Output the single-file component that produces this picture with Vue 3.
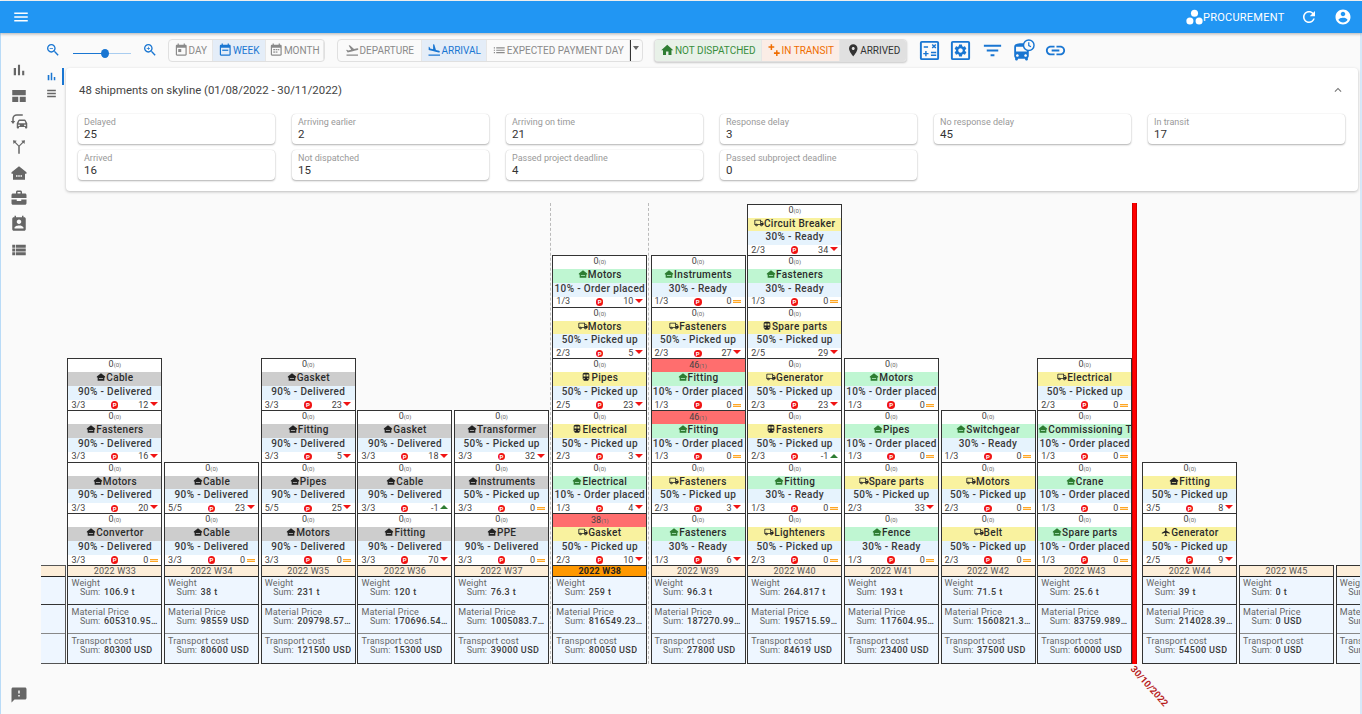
<template>
  <div class="app">
    <header class="appbar">
      <svg class="bar-icon menu-icon" viewBox="0 0 24 24"><path :d="icons.menu" /></svg>
      <div class="bar-right">
        <svg class="dots-icon" viewBox="0 0 24 24"><circle cx="12" cy="6" r="5" /><circle cx="5.5" cy="17" r="5" /><circle cx="18.5" cy="17" r="5" /></svg>
        <span class="module-name">PROCUREMENT</span>
        <svg class="bar-icon refresh-icon" viewBox="0 0 24 24"><path :d="icons.refresh" /></svg>
        <svg class="bar-icon account-icon" viewBox="0 0 24 24"><path :d="icons.account" /></svg>
      </div>
    </header>

    <div class="layout">
      <nav class="sidenav">
        <div class="nav-top">
          <svg v-for="n in navIcons" :key="n" class="nav-icon" viewBox="0 0 24 24"><path :d="icons[n]" /></svg>
        </div>
        <svg class="nav-icon feedback" viewBox="0 0 24 24"><path :d="icons.feedback" /></svg>
      </nav>

      <main class="main">
        <div class="toolbar">
          <svg class="zoom-icon" viewBox="0 0 24 24"><path :d="icons.zoomOut" /></svg>
          <div class="slider"><span class="slider-fill"></span><span class="slider-thumb"></span></div>
          <svg class="zoom-icon zoom-in" viewBox="0 0 24 24"><path :d="icons.zoomIn" /></svg>

          <div class="btn-group first-group">
            <button class="tbtn w-day"><svg viewBox="0 0 24 24"><path :d="icons.calendar" /><rect x="7" y="10" width="5" height="5" /></svg>DAY</button>
            <button class="tbtn w-week active"><svg viewBox="0 0 24 24"><path :d="icons.calendar" /><rect x="7" y="11" width="10" height="2" /></svg>WEEK</button>
            <button class="tbtn w-month"><svg viewBox="0 0 24 24"><path :d="icons.calendar" /><rect x="7" y="10" width="3" height="2" /><rect x="11" y="10" width="3" height="2" /><rect x="15" y="10" width="2" height="2" /><rect x="7" y="14" width="3" height="2" /><rect x="11" y="14" width="3" height="2" /></svg>MONTH</button>
          </div>

          <div class="btn-group second-group">
            <button class="tbtn w-dep"><svg viewBox="0 0 24 24"><path :d="icons.takeoff" /></svg>DEPARTURE</button>
            <button class="tbtn w-arr active"><svg viewBox="0 0 24 24"><path :d="icons.land" /></svg>ARRIVAL</button>
            <button class="tbtn w-pay"><svg viewBox="0 0 24 24"><path :d="icons.list" /></svg>EXPECTED PAYMENT DAY</button>
            <span class="drop"><span class="drop-arrow"></span></span>
          </div>

          <div class="btn-group third-group">
            <button class="tbtn w-nd green"><svg viewBox="0 0 24 24"><path :d="icons.home" /></svg>NOT DISPATCHED</button>
            <button class="tbtn w-it orange"><svg viewBox="0 0 24 24"><path :d="icons.transit" /></svg>IN TRANSIT</button>
            <button class="tbtn w-ad dark"><svg viewBox="0 0 24 24"><path :d="icons.pin" /></svg>ARRIVED</button>
          </div>

          <div class="tool-icons">
            <svg class="tool calc" viewBox="0 0 24 24">
              <path :d="icons.calc" />
            </svg>
            <svg class="tool" viewBox="0 0 24 24">
              <path d="M4 2h16a2 2 0 0 1 2 2v16a2 2 0 0 1-2 2H4a2 2 0 0 1-2-2V4a2 2 0 0 1 2-2zm0 2v16h16V4z" />
              <path :d="icons.gear" transform="translate(4.2 4.2) scale(.65)" />
            </svg>
            <svg class="tool" viewBox="0 0 24 24"><path :d="icons.filter" /></svg>
            <svg class="tool" viewBox="0 0 24 24">
              <path :d="icons.bus" transform="translate(-1.500 2.500) scale(.95)" />
              <circle cx="17.500" cy="6.500" r="5.500" fill="#fafafa" stroke="#1976d2" stroke-width="1.500" />
              <path d="M17.500 3.500v3.300l2.300 1.300" fill="none" stroke="#1976d2" stroke-width="1.300" />
            </svg>
            <svg class="tool" viewBox="0 0 24 24"><path :d="icons.link" /></svg>
          </div>
        </div>

        <div class="top-row">
          <div class="subnav">
            <svg class="sub-icon blue" viewBox="0 0 24 24"><path :d="icons.bars" /></svg>
            <svg class="sub-icon" viewBox="0 0 24 24"><path :d="icons.lines" /></svg>
            <span class="sub-active"></span>
          </div>
          <section class="panel">
            <div class="panel-head">
              <span>48 shipments on skyline (01/08/2022 - 30/11/2022)</span>
              <svg class="chevron" viewBox="0 0 24 24"><path d="M7.41 15.41 12 10.83l4.59 4.58L18 14l-6-6-6 6z" /></svg>
            </div>
            <div class="stats">
              <div v-for="s in stats" :key="s.label" class="stat">
                <div class="stat-label">{{ s.label }}</div>
                <div class="stat-value">{{ s.value }}</div>
              </div>
            </div>
          </section>
        </div>

        <div class="chart">
          <span class="week-mark" style="left: 508.5px"></span>
          <span class="week-mark" style="left: 607px"></span>

          <div class="columns">
            <div
              v-for="w in weeks"
              :key="w.name"
              class="col"
              :class="{ current: w.current, 'after-line': w.afterLine, 'no-text': w.blank }"
            >
              <div v-for="(c, i) in w.cards" :key="i" class="card">
                <div class="count" :class="{ alarm: c.alarm }">
                  {{ c.alarm ? c.alarm : 0 }}<small>({{ c.alarm ? 1 : 0 }})</small>
                </div>
                <div class="name" :class="c.band">
                  <svg class="kind" viewBox="0 0 24 24"><path :d="icons[c.kind]" /></svg>{{ c.name }}
                </div>
                <div class="progress">{{ c.progress }}</div>
                <div class="foot">
                  <span class="frac">{{ c.frac }}</span>
                  <span class="pcell"><span v-if="!c.noP" class="p-dot">P</span></span>
                  <span class="delay">
                    {{ c.delay }}
                    <i v-if="c.delay > 0" class="tri-down"></i>
                    <i v-else-if="c.delay < 0" class="tri-up"></i>
                    <i v-else class="equal"></i>
                  </span>
                </div>
              </div>
              <div class="week-name">{{ w.blank ? '' : w.name }}</div>
              <div v-for="m in metrics(w)" :key="m.label" class="metric">
                <template v-if="!w.blank">
                  <div class="metric-label">{{ m.label }}</div>
                  <div class="metric-sum"><span>Sum:</span><b>{{ m.value }}</b></div>
                </template>
              </div>
            </div>
          </div>

          <span class="today-line"></span>
          <span class="today-label">30/10/2022</span>
        </div>
      </main>
    </div>
  </div>
</template>

<script setup>
const icons = {
  menu: 'M3 18h18v-2H3v2zm0-5h18v-2H3v2zm0-7v2h18V6H3z',
  refresh: 'M17.65 6.35C16.2 4.9 14.21 4 12 4c-4.42 0-7.99 3.58-7.99 8s3.57 8 7.99 8c3.73 0 6.84-2.55 7.73-6h-2.08c-.82 2.33-3.04 4-5.65 4-3.31 0-6-2.69-6-6s2.69-6 6-6c1.66 0 3.14.69 4.22 1.78L13 11h7V4l-2.35 2.35z',
  account: 'M12 2C6.48 2 2 6.48 2 12s4.48 10 10 10 10-4.48 10-10S17.52 2 12 2zm0 3c1.66 0 3 1.34 3 3s-1.34 3-3 3-3-1.34-3-3 1.34-3 3-3zm0 14.2c-2.5 0-4.71-1.28-6-3.22.03-1.99 4-3.08 6-3.08 1.99 0 5.97 1.09 6 3.08-1.29 1.94-3.5 3.22-6 3.22z',
  bars: 'M5 9.2h3V19H5zM10.6 5h2.8v14h-2.8zm5.6 8H19v6h-2.8z',
  lines: 'M4 5h16v3H4zm0 5.5h16v3H4zM4 16h16v3H4z',
  quilt: 'M3 4h18v7H3zM3 13h8v7H3zM13 13h8v7h-8z',
  cars: 'M9 3h8v2H9a4 4 0 0 0-4 4v3h2l-3 4-3-4h2V9a6 6 0 0 1 6-6zm3 7h7.5c.6 0 1 .3 1.2.8L23 15v6a1 1 0 0 1-1 1h-1a1 1 0 0 1-1-1v-1h-8v1a1 1 0 0 1-1 1h-1a1 1 0 0 1-1-1v-6l2.3-4.2c.2-.5.7-.8 1.2-.8zm.5 2-1.2 3h9.4l-1.2-3zM12 16.5a1.2 1.2 0 1 0 0 2.4 1.2 1.2 0 0 0 0-2.4zm8 0a1.2 1.2 0 1 0 0 2.4 1.2 1.2 0 0 0 0-2.4z',
  merge: 'M4 3l5 .7-1.6 1.6L12 9.9l4.6-4.6L15 3.7 20 3l-.7 5-1.6-1.6L13 11.1V21h-2v-9.9L6.300 6.400 4.700 8z',
  bank: 'M12 3 2 11v2h2v8h16v-8h2v-2zM8 15h2v2H8zm3 0h2v2h-2zm3 0h2v2h-2z',
  work: 'M20 6h-4V4c0-1.11-.89-2-2-2h-4c-1.11 0-2 .89-2 2v2H4c-1.11 0-1.99.89-1.99 2L2 12h20V8c0-1.11-.89-2-2-2zm-6 0h-4V4h4v2zM2 14v5c0 1.11.89 2 2 2h16c1.11 0 2-.89 2-2v-5h-7v2H9v-2z',
  agenda: 'M19 3h-1V1h-2v2H8V1H6v2H5c-1.1 0-2 .9-2 2v14c0 1.1.9 2 2 2h14c1.1 0 2-.9 2-2V5c0-1.1-.9-2-2-2zm-7 3c1.66 0 3 1.34 3 3s-1.34 3-3 3-3-1.34-3-3 1.34-3 3-3zm6 12H6v-1c0-2 4-3.1 6-3.1s6 1.1 6 3.1v1z',
  table: 'M3 5h4v4H3zM8 5h13v4H8zM3 10h4v4H3zM8 10h13v4H8zM3 15h4v4H3zM8 15h13v4H8z',
  feedback: 'M20 2H4c-1.1 0-1.99.9-1.99 2L2 22l4-4h14c1.1 0 2-.9 2-2V4c0-1.1-.9-2-2-2zm-7 12h-2v-2h2v2zm0-4h-2V6h2v4z',
  zoomOut: 'M15.5 14h-.79l-.28-.27C15.41 12.59 16 11.11 16 9.5 16 5.91 13.09 3 9.5 3S3 5.91 3 9.5 5.91 16 9.5 16c1.61 0 3.09-.59 4.23-1.57l.27.28v.79l5 4.99L20.490 19l-4.99-5zm-6 0C7.01 14 5 11.99 5 9.5S7.01 5 9.5 5 14 7.010 14 9.500 11.99 14 9.500 14zM7 9h5v1H7z',
  zoomIn: 'M15.5 14h-.79l-.28-.27C15.41 12.59 16 11.11 16 9.5 16 5.91 13.09 3 9.5 3S3 5.91 3 9.5 5.91 16 9.5 16c1.61 0 3.09-.59 4.23-1.57l.27.28v.79l5 4.99L20.490 19l-4.99-5zm-6 0C7.01 14 5 11.99 5 9.5S7.01 5 9.5 5 14 7.010 14 9.500 11.99 14 9.500 14zM12 10h-2v2H9v-2H7V9h2V7h1v2h2v1z',
  calendar: 'M19 3h-1V1h-2v2H8V1H6v2H5c-1.1 0-2 .9-2 2v14c0 1.1.9 2 2 2h14c1.1 0 2-.9 2-2V5c0-1.1-.9-2-2-2zm0 16H5V8h14v11z',
  takeoff: 'M2.5 19h19v2h-19zm19.57-9.36c-.21-.8-1.04-1.28-1.84-1.06L14.92 10l-6.9-6.43-1.93.51 4.14 7.17-4.97 1.33-1.97-1.54-1.45.39 1.82 3.16.77 1.33 1.6-.43 5.31-1.42 4.35-1.16L21 11.49c.81-.23 1.28-1.05 1.07-1.85z',
  land: 'M2.5 19h19v2h-19zm7.18-5.730 4.35 1.16 5.31 1.42c.8.21 1.62-.26 1.84-1.06.21-.8-.26-1.62-1.06-1.84l-5.31-1.42-2.76-9.02L10.120 2v8.280L5.150 8.950l-.93-2.320-1.450-.39v5.170l1.600.43 5.310 1.430z',
  list: 'M3 13h2v-2H3v2zm0 4h2v-2H3v2zm0-8h2V7H3v2zm4 4h14v-2H7v2zm0 4h14v-2H7v2zM7 7v2h14V7H7z',
  home: 'M10 20v-6h4v6h5v-8h3L12 3 2 12h3v8z',
  transit: 'M6 2h2.500v3.500H12V8H8.500v3.500H6V8H2.500V5.500H6zM15 12h2.500v3.500H21V18h-3.500v3.500H15V18h-3.500v-2.500H15z',
  pin: 'M12 2C8.130 2 5 5.130 5 9c0 5.250 7 13 7 13s7-7.750 7-13c0-3.870-3.130-7-7-7zm0 9.500c-1.380 0-2.500-1.120-2.500-2.500s1.120-2.500 2.500-2.500 2.500 1.120 2.500 2.500-1.120 2.500-2.500 2.500z',
  calc: 'M4 2h16a2 2 0 0 1 2 2v16a2 2 0 0 1-2 2H4a2 2 0 0 1-2-2V4a2 2 0 0 1 2-2zm0 2v16h16V4zm2 3.500h4.500V9H6zm8.300-1.200 1.100-1.100 1.300 1.300 1.300-1.300 1.100 1.100-1.300 1.300 1.300 1.300-1.100 1.100-1.300-1.300-1.300 1.300-1.100-1.100 1.300-1.300zM7.500 12.500H9v2h2V16H9v2H7.500v-2h-2v-1.500h2zm6 .800H19v1.500h-5.500zm0 3H19v1.500h-5.500z',
  gear: 'M19.140 12.940c.04-.3.06-.61.06-.94 0-.32-.02-.64-.07-.94l2.030-1.580c.18-.14.23-.41.12-.61l-1.920-3.320c-.12-.22-.37-.29-.59-.22l-2.390.96c-.5-.38-1.030-.7-1.620-.94l-.36-2.540c-.04-.24-.24-.41-.48-.41h-3.840c-.24 0-.43.17-.47.41l-.36 2.540c-.59.24-1.130.57-1.620.94l-2.390-.96c-.22-.08-.47 0-.59.22L2.740 8.870c-.12.21-.08.47.12.61l2.030 1.580c-.05.3-.09.63-.09.94s.02.64.07.94l-2.030 1.580c-.18.14-.23.41-.12.61l1.920 3.320c.12.22.37.29.59.22l2.390-.96c.5.38 1.030.7 1.620.94l.36 2.540c.05.24.24.41.48.41h3.840c.24 0 .44-.17.47-.41l.36-2.540c.59-.24 1.130-.56 1.620-.94l2.390.96c.22.08.47 0 .59-.22l1.920-3.320c.12-.22.07-.47-.12-.61l-2.010-1.580zM12 15.600c-1.980 0-3.600-1.620-3.600-3.600s1.620-3.600 3.600-3.600 3.600 1.620 3.600 3.600-1.620 3.600-3.600 3.600z',
  filter: 'M10 18h4v-2h-4v2zM3 6v2h18V6H3zm3 7h12v-2H6v2z',
  bus: 'M4 16c0 .88.39 1.670 1 2.220V20c0 .55.45 1 1 1h1c.55 0 1-.45 1-1v-1h8v1c0 .55.45 1 1 1h1c.55 0 1-.45 1-1v-1.780c.61-.55 1-1.340 1-2.220V6c0-3.500-3.580-4-8-4s-8 .5-8 4v10zm3.500 1c-.83 0-1.500-.67-1.500-1.500S6.670 14 7.500 14s1.500.67 1.500 1.500S8.330 17 7.500 17zm9 0c-.83 0-1.500-.67-1.500-1.500s.67-1.500 1.500-1.500 1.500.67 1.500 1.500-.67 1.500-1.500 1.500zm1.500-6H6V6h12v5z',
  link: 'M3.900 12c0-1.710 1.390-3.100 3.100-3.100h4V7H7c-2.760 0-5 2.240-5 5s2.240 5 5 5h4v-1.900H7c-1.710 0-3.100-1.390-3.100-3.100zM8 13h8v-2H8v2zm9-6h-4v1.900h4c1.710 0 3.100 1.390 3.100 3.100s-1.390 3.100-3.100 3.100h-4V17h4c2.760 0 5-2.240 5-5s-2.240-5-5-5z',
  // cargo kinds
  h: 'M12 3 2 11v2h2v8h16v-8h2v-2zM7 15h10v2H7z',
  t: 'M20 8h-3V4H3c-1.100 0-2 .9-2 2v11h2c0 1.660 1.340 3 3 3s3-1.340 3-3h6c0 1.660 1.340 3 3 3s3-1.340 3-3h2v-5l-3-4zm-.5 1.500 1.960 2.500H17V9.500h2.500zM6 18c-.55 0-1-.45-1-1s.45-1 1-1 1 .45 1 1-.45 1-1 1zm2.220-3c-.55-.61-1.330-1-2.220-1s-1.670.39-2.220 1H3V6h12v9H8.220zM18 18c-.55 0-1-.45-1-1s.45-1 1-1 1 .45 1 1-.45 1-1 1z',
  r: 'M12 2c-4 0-8 .5-8 4v9.500C4 17.430 5.570 19 7.500 19L6 20.500v.5h12v-.5L16.500 19c1.930 0 3.500-1.570 3.500-3.500V6c0-3.500-3.580-4-8-4zM7.500 17c-.83 0-1.500-.67-1.500-1.500S6.670 14 7.500 14s1.500.67 1.500 1.500S8.330 17 7.500 17zm3.500-6H6V6h5v5zm5.500 6c-.83 0-1.500-.67-1.500-1.500s.67-1.500 1.500-1.500 1.500.67 1.500 1.500-.67 1.500-1.500 1.500zm1.500-6h-5V6h5v5z',
  p: 'M21 16v-2l-8-5V3.500c0-.83-.67-1.500-1.500-1.500S10 2.670 10 3.500V9l-8 5v2l8-2.500V19l-2 1.500V22l3.500-1 3.500 1v-1.500L13 19v-5.500l8 2.500z'
};

const navIcons = ['bars', 'quilt', 'cars', 'merge', 'bank', 'work', 'agenda', 'table'];

const stats = [
  { label: 'Delayed', value: 25 },
  { label: 'Arriving earlier', value: 2 },
  { label: 'Arriving on time', value: 21 },
  { label: 'Response delay', value: 3 },
  { label: 'No response delay', value: 45 },
  { label: 'In transit', value: 17 },
  { label: 'Arrived', value: 16 },
  { label: 'Not dispatched', value: 15 },
  { label: 'Passed project deadline', value: 4 },
  { label: 'Passed subproject deadline', value: 0 }
];

const DELIVERED = '90% - Delivered';
const PICKED = '50% - Picked up';
const ORDER = '10% - Order placed';
const READY = '30% - Ready';

const card = (name, kind, band, progress, frac, delay, extra = {}) => ({ name, kind, band, progress, frac, delay, ...extra });
const gray = (name, frac, delay) => card(name, 'h', 'gray', DELIVERED, frac, delay);
const order = (name, delay = 0, extra) => card(name, 'h', 'green', ORDER, '1/3', delay, extra);
const ready = (name, delay = 0) => card(name, 'h', 'green', READY, '1/3', delay);
const picked = (name, kind, frac, delay, extra) => card(name, kind, 'yellow', PICKED, frac, delay, extra);

const weeks = [
  { name: 'W32', blank: true, cards: [], weight: '', price: '', transport: '' },
  {
    name: '2022 W33', weight: '106.9 t', price: '605310.95 USD', transport: '80300 USD',
    cards: [gray('Cable', '3/3', 12), gray('Fasteners', '3/3', 16), gray('Motors', '3/3', 20), gray('Convertor', '3/3', 0)]
  },
  {
    name: '2022 W34', weight: '38 t', price: '98559 USD', transport: '80600 USD',
    cards: [gray('Cable', '5/5', 23), gray('Cable', '3/3', 0)]
  },
  {
    name: '2022 W35', weight: '231 t', price: '209798.57 USD', transport: '121500 USD',
    cards: [gray('Gasket', '3/3', 23), gray('Fitting', '3/3', 5), gray('Pipes', '5/5', 25), gray('Motors', '3/3', 0)]
  },
  {
    name: '2022 W36', weight: '120 t', price: '170696.54 USD', transport: '15300 USD',
    cards: [gray('Gasket', '3/3', 18), gray('Cable', '3/3', -1), gray('Fitting', '3/3', 70)]
  },
  {
    name: '2022 W37', weight: '76.3 t', price: '1005083.71 USD', transport: '39000 USD',
    cards: [card('Transformer', 'h', 'gray', PICKED, '3/3', 32), card('Instruments', 'h', 'gray', PICKED, '3/3', 0), gray('PPE', '3/3', 0)]
  },
  {
    name: '2022 W38', current: true, weight: '259 t', price: '816549.23 USD', transport: '80050 USD',
    cards: [
      order('Motors', 10), picked('Motors', 't', '2/3', 5), picked('Pipes', 'r', '2/5', 23),
      picked('Electrical', 'r', '2/3', 3), order('Electrical', 4), picked('Gasket', 't', '2/3', 10, { alarm: 38 })
    ]
  },
  {
    name: '2022 W39', weight: '96.3 t', price: '187270.99 USD', transport: '27800 USD',
    cards: [
      ready('Instruments'), picked('Fasteners', 't', '2/3', 27), order('Fitting', 0, { alarm: 46 }),
      order('Fitting', 0, { alarm: 46 }), picked('Fasteners', 't', '2/3', 3), ready('Fasteners', 6)
    ]
  },
  {
    name: '2022 W40', weight: '264.817 t', price: '195715.59 USD', transport: '84619 USD',
    cards: [
      card('Circuit Breaker', 't', 'yellow', READY, '2/3', 34), ready('Fasteners'),
      picked('Spare parts', 'r', '2/5', 29, { noP: true }), picked('Generator', 't', '2/3', 23),
      picked('Fasteners', 'r', '2/3', -1), ready('Fitting'), picked('Lighteners', 't', '2/3', 0)
    ]
  },
  {
    name: '2022 W41', weight: '193 t', price: '117604.95 USD', transport: '23400 USD',
    cards: [order('Motors'), order('Pipes'), picked('Spare parts', 't', '2/3', 33, { noP: true }), ready('Fence')]
  },
  {
    name: '2022 W42', weight: '71.5 t', price: '1560821.37 USD', transport: '37500 USD',
    cards: [ready('Switchgear'), picked('Motors', 't', '2/3', 0), picked('Belt', 't', '2/3', 0)]
  },
  {
    name: '2022 W43', weight: '25.6 t', price: '83759.9891 USD', transport: '60000 USD',
    cards: [picked('Electrical', 't', '2/3', 0), order('Commissioning Tools'), order('Crane'), order('Spare parts')]
  },
  {
    name: '2022 W44', afterLine: true, weight: '39 t', price: '214028.39 USD', transport: '54500 USD',
    cards: [picked('Fitting', 'h', '3/5', 8), picked('Generator', 'p', '2/5', 9)]
  },
  { name: '2022 W45', weight: '0 t', price: '0 USD', transport: '0 USD', cards: [] },
  { name: '2022 W46', weight: '0 t', price: '0 USD', transport: '0 USD', cards: [] }
];

const metrics = (w) => [
  { label: 'Weight', value: w.weight },
  { label: 'Material Price', value: w.price },
  { label: 'Transport cost', value: w.transport }
];
</script>

<style>
html,
body {
  margin: 0;
  padding: 0;
  background: #fafafa;
  overflow: hidden;
}
</style>

<style scoped>
.app {
  height: 714px;
  width: 1362px;
  display: flex;
  flex-direction: column;
  padding-top: 1px;
  box-sizing: border-box;
  background: #fafafa;
  font-family: Roboto, "Liberation Sans", sans-serif;
  color: #333;
  overflow: hidden;
}

.appbar {
  height: 32px;
  flex: none;
  background: #2196f3;
  display: flex;
  align-items: center;
  justify-content: space-between;
  box-shadow: 0 1px 3px rgba(0, 0, 0, 0.3);
  position: relative;
  z-index: 2;
}

.bar-icon {
  fill: #fff;
  width: 18px;
  height: 18px;
}

.menu-icon {
  margin-left: 12px;
}

.bar-right {
  display: flex;
  align-items: center;
  color: #fff;
  padding-right: 10px;
}

.dots-icon {
  fill: #fff;
  width: 17px;
  height: 17px;
}

.module-name {
  font-size: 11px;
  letter-spacing: 0.25px;
  width: 81px;
  white-space: nowrap;
}

.refresh-icon {
  margin-left: 16px;
}

.account-icon {
  margin-left: 16px;
}

.layout {
  flex: 1;
  display: flex;
  min-height: 0;
  border-left: 1px solid #b9dbf7;
  border-right: 2px solid #d6e9f9;
}

.sidenav {
  width: 40px;
  flex: none;
  display: flex;
  flex-direction: column;
  justify-content: space-between;
  align-items: flex-start;
  padding: 28px 0 10px 9px;
  box-sizing: border-box;
}

.nav-top {
  display: flex;
  flex-direction: column;
  gap: 7.7px;
}

.nav-icon {
  width: 18px;
  height: 18px;
  fill: #666;
  display: block;
}

.main {
  flex: 1;
  min-width: 0;
  display: flex;
  flex-direction: column;
}

.toolbar {
  height: 35px;
  flex: none;
  display: flex;
  align-items: center;
  padding-left: 4px;
}

.zoom-icon {
  width: 16px;
  height: 16px;
  fill: #1976d2;
  flex: none;
  margin-bottom: 2px;
}

.zoom-in {
  margin-left: 11px;
}

.slider {
  width: 58px;
  height: 1px;
  margin: 5px 0 0 12px;
  background: #a9cdf0;
  position: relative;
}

.slider-fill {
  position: absolute;
  left: 0;
  top: 0;
  height: 1px;
  width: 32px;
  background: #1976d2;
}

.slider-thumb {
  position: absolute;
  left: 28px;
  top: -4px;
  width: 8px;
  height: 9px;
  border-radius: 50%;
  background: #1976d2;
}

.btn-group {
  display: flex;
  height: 23px;
  border: 1px solid #e0e0e0;
  border-radius: 4px;
  box-sizing: border-box;
  overflow: hidden;
  background: #fafafa;
  flex: none;
}

.first-group {
  margin-left: 10px;
}

.second-group {
  margin-left: 12px;
}

.third-group {
  margin-left: 11px;
  box-shadow: 0 1px 2px rgba(0, 0, 0, 0.2);
}

.tbtn {
  font: inherit;
  font-size: 10px;
  color: #8a8a8a;
  background: transparent;
  border: none;
  border-right: 1px solid #e6e6e6;
  padding: 0;
  display: flex;
  align-items: center;
  justify-content: center;
  white-space: nowrap;
  box-sizing: border-box;
}

.tbtn svg {
  width: 14.5px;
  height: 14.5px;
  fill: currentColor;
  flex: none;
}

.w-day { width: 44px; }
.w-week { width: 53px; }
.w-month { width: 58px; }
.w-dep { width: 84px; }
.w-arr { width: 65px; }
.w-pay { width: 143px; }
.w-nd { width: 107px; }
.w-it { width: 78px; }
.w-ad { width: 66px; border-right: none; }

.tbtn.active {
  background: #e4edf8;
  color: #1976d2;
}

.green {
  background: #e8f1e8;
  color: #388e3c;
}

.green svg {
  fill: #2e7d32;
}

.orange {
  background: #fbede6;
  color: #ef6c00;
}

.dark {
  background: #e0e0e0;
  color: #333;
}

.drop {
  width: 11px;
  border-left: 1px solid #333;
  position: relative;
}

.drop-arrow {
  position: absolute;
  left: 2px;
  top: 6px;
  border-left: 3.5px solid transparent;
  border-right: 3.5px solid transparent;
  border-top: 4px solid #666;
}

.tool-icons {
  display: flex;
  align-items: center;
  margin-left: 10.6px;
  gap: 8.5px;
}

.tool {
  width: 23px;
  height: 23px;
  fill: #1976d2;
  flex: none;
}

.top-row {
  display: flex;
  flex: none;
  height: 123px;
}

.subnav {
  width: 25px;
  flex: none;
  position: relative;
  padding: 2px 0 0 4px;
  box-sizing: border-box;
}

.sub-icon {
  display: block;
  width: 13px;
  height: 13px;
  fill: #666;
  margin-bottom: 4px;
}

.sub-icon.blue {
  fill: #1976d2;
}

.sub-active {
  position: absolute;
  right: 2px;
  top: 0;
  width: 2px;
  height: 17px;
  background: #1976d2;
}

.panel {
  width: 1292px;
  background: #fff;
  border-radius: 4px;
  box-shadow: 0 1px 3px rgba(0, 0, 0, 0.25);
  padding: 0 13px 0 12px;
  box-sizing: border-box;
}

.panel-head {
  height: 46px;
  display: flex;
  align-items: center;
  justify-content: space-between;
  font-size: 11.4px;
  color: #444;
  padding: 0 0 2px 1px;
  box-sizing: border-box;
}

.chevron {
  width: 14px;
  height: 14px;
  fill: #777;
}

.stats {
  display: grid;
  grid-template-columns: repeat(6, 197px);
  column-gap: 17px;
  row-gap: 6px;
}

.stat {
  height: 30px;
  padding: 3px 6px 0;
  box-sizing: border-box;
  border-radius: 4px;
  background: #fff;
  box-shadow: 0 1px 2px rgba(0, 0, 0, 0.3), 0 0 1px rgba(0, 0, 0, 0.18);
}

.stat-label {
  font-size: 9px;
  line-height: 11px;
  color: #999;
}

.stat-value {
  font-size: 11.5px;
  line-height: 13px;
  color: #333;
}

.chart {
  flex: 1;
  position: relative;
  overflow: hidden;
  padding-bottom: 50px;
  box-sizing: border-box;
  display: flex;
  align-items: flex-end;
}

.week-mark {
  position: absolute;
  top: 12px;
  bottom: 50px;
  border-left: 1px dashed #bbb;
}

.columns {
  display: flex;
  align-items: flex-end;
  gap: 1.7px;
  margin-left: -70.3px;
  position: relative;
  z-index: 1;
}

.col {
  width: 95px;
  flex: none;
  box-sizing: border-box;
  border: 1px solid #333;
  background: #fff;
}

.col.no-text {
  border-color: #555;
}

.col.current {
  margin: 0 1.5px;
}

.col.after-line {
  margin-left: 8.4px;
}

.card {
  height: 51.67px;
  display: grid;
  grid-template-rows: 13px 13.5px 14px 1fr;
  border-bottom: 1px solid #333;
  box-sizing: border-box;
  overflow: hidden;
}

.count {
  font-size: 9px;
  line-height: 11px;
  text-align: center;
  color: #444;
}

.count small {
  font-size: 6px;
  color: #666;
}

.count.alarm {
  background: #ff6e6e;
  line-height: 13px;
}

.name {
  font-size: 10px;
  font-weight: 500;
  letter-spacing: 0.35px;
  line-height: 12.5px;
  text-align: center;
  white-space: nowrap;
  overflow: hidden;
  color: #2b2b2b;
}

.name.gray { background: #cdcdcd; }
.name.green { background: #bff6d2; }
.name.yellow { background: #f9f29f; }

.kind {
  width: 10px;
  height: 10px;
  vertical-align: -1px;
  fill: #222;
}

.progress {
  font-size: 10px;
  font-weight: 500;
  letter-spacing: 0.35px;
  line-height: 12.5px;
  text-align: center;
  white-space: nowrap;
  overflow: hidden;
  background: #e6f3fd;
  color: #3a3a3a;
}

.foot {
  display: grid;
  grid-template-columns: 1fr auto 1fr;
  align-items: center;
  font-size: 9px;
  line-height: 9px;
  padding: 0 3.5px 0 3px;
  color: #444;
}

.p-dot {
  display: block;
  width: 7.5px;
  height: 7.5px;
  border-radius: 50%;
  background: #f01414;
  color: #fff;
  font-size: 6px;
  font-weight: 700;
  line-height: 7.5px;
  text-align: center;
}

.pcell {
  width: 7.5px;
}

.delay {
  display: flex;
  justify-content: flex-end;
  align-items: center;
  gap: 1.5px;
}

.tri-down {
  width: 0;
  height: 0;
  border-left: 4px solid transparent;
  border-right: 4px solid transparent;
  border-top: 4px solid #f01414;
  margin-bottom: 2px;
}

.tri-up {
  width: 0;
  height: 0;
  border-left: 4px solid transparent;
  border-right: 4px solid transparent;
  border-bottom: 4px solid #2e7d32;
  margin-bottom: 2px;
}

.equal {
  width: 8px;
  height: 3px;
  box-sizing: border-box;
  background: #ffe0b2;
  border-top: 1px solid #ffa726;
  border-bottom: 1px solid #ffa726;
}

.week-name {
  height: 10.5px;
  box-sizing: border-box;
  background: #fdeed9;
  border-bottom: 1px solid #222;
  font-size: 9px;
  line-height: 10px;
  letter-spacing: 0.2px;
  text-align: center;
  color: #555;
}

.current .week-name {
  background: #ff9800;
  color: #222;
  font-weight: 700;
}

.metric {
  height: 28.8px;
  box-sizing: border-box;
  background: #eef6ff;
  border-bottom: 1px solid #333;
  padding: 1.5px 2px 0 3px;
  font-size: 9px;
  overflow: hidden;
}

.metric:nth-last-child(2) {
  border-bottom-color: #888;
}

.metric:last-child {
  border-bottom: none;
}

.metric-label {
  line-height: 10px;
  color: #666;
  letter-spacing: 0.15px;
  white-space: nowrap;
}

.metric-sum {
  display: flex;
  line-height: 9.5px;
  padding-left: 8.5px;
  color: #666;
  white-space: nowrap;
}

.metric-sum span {
  flex: none;
  width: 24px;
}

.metric-sum b {
  font-weight: 500;
  letter-spacing: 0.4px;
  color: #3a3a3a;
  overflow: hidden;
  text-overflow: ellipsis;
  min-width: 0;
}

.today-line {
  position: absolute;
  left: 1091px;
  top: 12px;
  bottom: 50px;
  width: 5px;
  box-sizing: border-box;
  background: #f00;
  border-left: 1px solid #c00;
  border-right: 1px solid #c00;
  z-index: 2;
}

.today-label {
  position: absolute;
  left: 1095px;
  top: 473px;
  font-size: 9.5px;
  font-weight: 700;
  line-height: 10px;
  color: #b71c1c;
  white-space: nowrap;
  transform: rotate(48deg);
  transform-origin: left top;
  z-index: 2;
}
</style>
